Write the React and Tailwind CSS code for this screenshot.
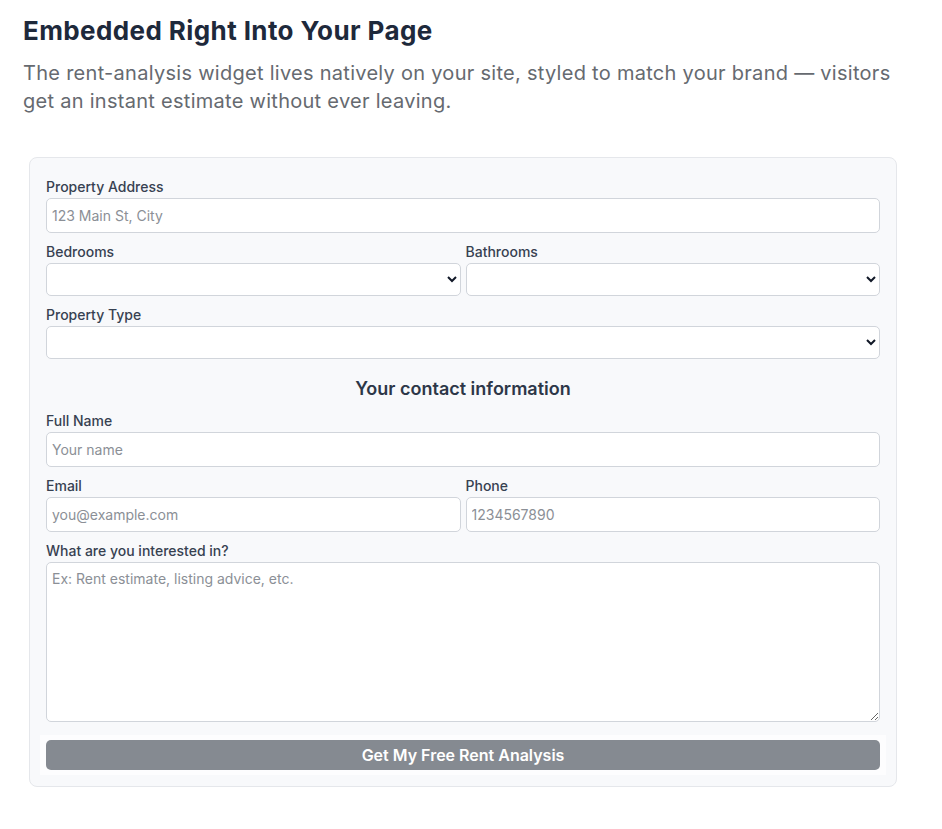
import React from "react";

const labelCls = "block text-[14px] leading-[20px] font-medium text-[#374151]";
const inputCls =
  "block w-full h-[35px] mt-[1px] rounded-[5px] border border-[#d1d5db] bg-white px-[5px] text-[14px] text-[#111827] placeholder:text-[#8b8f96] outline-none";
const selectCls =
  "block w-full h-[33px] mt-[1px] rounded-[5px] border border-[#d1d5db] bg-white px-[4px] text-[14px] text-[#111827] outline-none";

export default function App() {
  return (
    <div
      className="min-h-screen bg-white pl-[23px] pt-[15px] pb-[40px]"
      style={{ fontFamily: "Inter, 'Noto Sans', sans-serif" }}
    >
      <div className="w-[880px]">
        <h1 className="text-[26px] leading-[32px] font-bold text-[#1e293b] tracking-[0.4px]">
          Embedded Right Into Your Page
        </h1>
        <p className="mt-[12px] text-[20px] leading-[28px] text-[#666a70] tracking-[0.28px]">
          The rent-analysis widget lives natively on your site, styled to match your brand — visitors get an instant estimate without ever leaving.
        </p>

        <form
          className="mx-[6px] mt-[42px] rounded-[8px] border border-[#e5e7eb] bg-[#f8f9fb] px-[16px] pt-[19px] pb-[11px]"
          onSubmit={(e) => e.preventDefault()}
        >
          <label className={labelCls}>Property Address</label>
          <input className={inputCls} placeholder="123 Main St, City" />

          <div className="mt-[9px] grid grid-cols-2 gap-x-[5px]">
            <div>
              <label className={labelCls}>Bedrooms</label>
              <select className={selectCls} defaultValue="">
                <option value=""></option>
                <option>1</option>
                <option>2</option>
                <option>3</option>
              </select>
            </div>
            <div>
              <label className={labelCls}>Bathrooms</label>
              <select className={selectCls} defaultValue="">
                <option value=""></option>
                <option>1</option>
                <option>2</option>
              </select>
            </div>
          </div>

          <div className="mt-[9px]">
            <label className={labelCls}>Property Type</label>
            <select className={selectCls} defaultValue="">
              <option value=""></option>
              <option>Single Family</option>
              <option>Condo</option>
            </select>
          </div>

          <h3 className="mt-[16px] text-center text-[18px] leading-[28px] font-semibold text-[#2d3748]">
            Your contact information
          </h3>

          <div className="mt-[8px]">
            <label className={labelCls}>Full Name</label>
            <input className={inputCls} placeholder="Your name" />
          </div>

          <div className="mt-[9px] grid grid-cols-2 gap-x-[5px]">
            <div>
              <label className={labelCls}>Email</label>
              <input className={inputCls} placeholder="you@example.com" />
            </div>
            <div>
              <label className={labelCls}>Phone</label>
              <input className={inputCls} placeholder="1234567890" />
            </div>
          </div>

          <div className="mt-[9px]">
            <label className={labelCls}>What are you interested in?</label>
            <textarea
              className="block w-full h-[160px] mt-[1px] rounded-[5px] border border-[#d1d5db] bg-white px-[5px] py-[6px] text-[14px] leading-[20px] text-[#111827] placeholder:text-[#8b8f96] outline-none"
              placeholder="Ex: Rent estimate, listing advice, etc."
            />
          </div>

          <div className="-mx-[6px] mt-[13px] bg-white/70 px-[6px] py-[5px]">
            <button
              type="submit"
              className="block w-full h-[30px] rounded-[5px] bg-[#858a91] text-[16px] font-semibold text-white"
            >
              Get My Free Rent Analysis
            </button>
          </div>
        </form>
      </div>
    </div>
  );
}
